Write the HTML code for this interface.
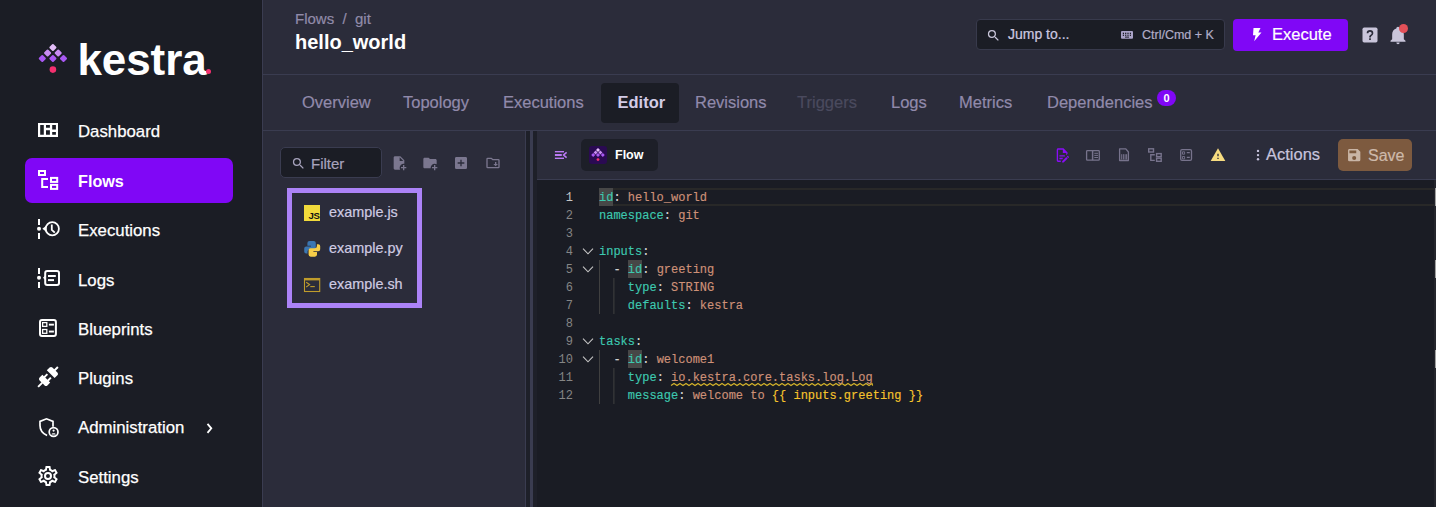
<!DOCTYPE html>
<html><head><meta charset="utf-8">
<style>
*{box-sizing:border-box;margin:0;padding:0}
html,body{width:1436px;height:507px;overflow:hidden;background:#2b2c3a;font-family:"Liberation Sans",sans-serif}
.abs{position:absolute}
svg{position:absolute;overflow:visible}
#side{position:absolute;left:0;top:0;width:262px;height:507px;background:#1b1d25}
#sideb{position:absolute;left:261px;top:0;width:1px;height:507px;background:#1a1b22}
#vline{position:absolute;left:262px;top:0;width:1px;height:507px;background:#3a3c50}
.mt{position:absolute;left:78px;font-size:16.8px;color:#fff;-webkit-text-stroke:0.25px currentColor;white-space:nowrap;line-height:20px}
.hl{position:absolute;height:1px;background:#3a3c50}
.tab{-webkit-text-stroke:0.2px currentColor;position:absolute;top:83px;height:39px;line-height:39px;font-size:16.5px;color:#918aab;white-space:nowrap}
.code{-webkit-text-stroke:0.15px currentColor;position:absolute;left:599px;font-family:"Liberation Mono",monospace;font-size:12px;line-height:18px;white-space:pre;color:#d4d4d4}
.k{color:#3dc9b0}.v{color:#ce9178}.y{color:#f5c32c}.p{color:#d4d4d4}
.ln{position:absolute;left:530px;width:43px;top:0;font-family:"Liberation Mono",monospace;font-size:12px;line-height:18px;color:#858585;text-align:right}
.fi{-webkit-text-stroke:0.2px currentColor;position:absolute;left:329px;font-size:14.4px;color:#cfcbe2;line-height:20px;white-space:nowrap}
.tic{fill:none;stroke:#6f6d84;stroke-width:1.5}
</style></head><body>
<div id="side"></div>
<div id="sideb"></div>
<div id="vline"></div>

<!-- logo -->
<svg style="left:0;top:0" width="80" height="80" viewBox="0 0 80 80">
    <g transform="rotate(45 52.9 47.5)"><rect x="50.1" y="44.7" width="5.6" height="5.6" rx="1" fill="#e3bdf8"/></g>
    <g transform="rotate(45 47.6 53)"><rect x="44.8" y="50.2" width="5.6" height="5.6" rx="1" fill="#c98cf3"/></g>
    <g transform="rotate(45 58.2 53)"><rect x="55.4" y="50.2" width="5.6" height="5.6" rx="1" fill="#c98cf3"/></g>
    <g transform="rotate(45 42.3 58.5)"><rect x="39.5" y="55.7" width="5.6" height="5.6" rx="1" fill="#a958f3"/></g>
    <g transform="rotate(45 52.9 58.5)"><rect x="50.1" y="55.7" width="5.6" height="5.6" rx="1" fill="#a958f3"/></g>
    <g transform="rotate(45 63.5 58.5)"><rect x="60.7" y="55.7" width="5.6" height="5.6" rx="1" fill="#a958f3"/></g>
    <circle cx="52.9" cy="69.6" r="3.3" fill="#f4306f"/>
</svg>
<div class="abs" style="left:77.5px;top:35px;font-size:44px;font-weight:bold;color:#fff;letter-spacing:-0.1px">kestra</div>
<div class="abs" style="left:205.6px;top:68.8px;width:5.4px;height:5.4px;border-radius:50%;background:#f4306f"></div>

<!-- menu -->
<div class="abs" style="left:25px;top:158px;width:208px;height:45px;border-radius:7px;background:#8007f6"></div>
<!-- dashboard icon -->
<svg style="left:0;top:0" width="70" height="500" viewBox="0 0 70 500">
  <path fill="#fff" fill-rule="evenodd" d="M38 123H58V137H38Z M40.2 125.1H43.8V134.8H40.2Z M46 125.1H49.9V127.7H46Z M46 130.2H49.9V134.8H46Z M52.2 125.1H55.9V129.6H52.2Z M52.2 132.1H55.9V134.8H52.2Z"/>
  <!-- flows -->
  <g fill="none" stroke="#fff" stroke-width="2">
    <rect x="39" y="171" width="6" height="4"/>
    <path d="M48 179H42.2V187H48"/>
    <rect x="51" y="177.9" width="6.2" height="4"/>
    <rect x="51" y="184.9" width="6.2" height="4"/>
  </g>
  <!-- executions -->
  <g fill="#fff">
    <rect x="38" y="219" width="2" height="6"/>
    <circle cx="39" cy="228.8" r="2"/>
    <rect x="38" y="233" width="2" height="6"/>
  </g>
  <g fill="none" stroke="#fff" stroke-width="1.8">
    <circle cx="52.3" cy="228.8" r="6.6"/>
    <path d="M51.8 224.6V229.8L54.8 232.6"/>
  </g>
  <g fill="#fff"><path d="M42.4 228.8L46.4 225.6V232Z"/>
  </g>
  <!-- logs -->
  <g fill="#fff">
    <rect x="38" y="268" width="2" height="6"/>
    <circle cx="39" cy="277.8" r="2"/>
    <rect x="38" y="282" width="2" height="6"/>
    <path d="M43 277.8 L45 275.8 V279.8Z"/>
    <rect x="48" y="275" width="7.8" height="2"/>
    <rect x="48" y="279.1" width="6" height="2"/>
  </g>
  <rect x="45.2" y="271" width="13.8" height="14" rx="2" fill="none" stroke="#fff" stroke-width="2"/>
  <!-- blueprints -->
  <g fill="none" stroke="#fff">
    <rect x="40" y="320" width="15.9" height="15.9" rx="2" stroke-width="2"/>
    <rect x="42.6" y="322.6" width="4.2" height="3.8" stroke-width="1.3"/>
    <rect x="42.6" y="329.5" width="4.2" height="3.8" stroke-width="1.3"/>
  </g>
  <g fill="#fff">
    <rect x="48.9" y="323.7" width="5" height="1.9"/>
    <rect x="48.9" y="330.6" width="5" height="1.9"/>
  </g>
  <!-- plugins -->
  <path transform="translate(36 365)" fill="#fff" d="M21.4 7.5C22.2 8.3 22.2 9.6 21.4 10.3L18.6 13.1L10.8 5.3L13.6 2.5C14.4 1.7 15.7 1.7 16.4 2.5L18.2 4.3L21.2 1.3L22.6 2.7L19.6 5.7L21.4 7.5M15.6 13.3L14.2 11.9L11.4 14.7L9.3 12.6L12.1 9.8L10.7 8.4L7.9 11.2L6.4 9.8L3.6 12.6C2.8 13.4 2.8 14.7 3.6 15.4L5.4 17.2L1.4 21.2L2.8 22.6L6.8 18.6L8.6 20.4C9.4 21.2 10.7 21.2 11.4 20.4L14.2 17.6L12.8 16.2L15.6 13.3Z"/>
  <!-- administration -->
  <g fill="none" stroke="#fff" stroke-width="1.7">
    <path d="M47.1 435.6 C42.5 433.5 40 429.5 40 425.5 V421.4 L46.5 418.8 L53 421.4 V426.8"/>
    <circle cx="53.6" cy="432" r="4.4"/>
  </g>
  <g fill="#fff">
    <circle cx="53.6" cy="430.6" r="1.1"/>
    <path d="M51.4 434.4 C51.6 432.9 55.6 432.9 55.8 434.4 Z"/>
  </g>
  <!-- settings -->
  <path transform="translate(36 464)" fill="#fff" d="M12,8A4,4 0 0,1 16,12A4,4 0 0,1 12,16A4,4 0 0,1 8,12A4,4 0 0,1 12,8M12,10A2,2 0 0,0 10,12A2,2 0 0,0 12,14A2,2 0 0,0 14,12A2,2 0 0,0 12,10M10,22C9.75,22 9.54,21.82 9.5,21.58L9.13,18.93C8.5,18.68 7.96,18.34 7.440,17.94L4.95,18.95C4.73,19.03 4.46,18.95 4.34,18.73L2.34,15.27C2.21,15.05 2.27,14.78 2.46,14.63L4.57,12.97L4.5,12L4.57,11L2.46,9.37C2.27,9.22 2.21,8.95 2.34,8.73L4.34,5.27C4.46,5.05 4.73,4.96 4.95,5.05L7.44,6.05C7.96,5.66 8.5,5.32 9.13,5.07L9.5,2.42C9.54,2.18 9.75,2 10,2H14C14.25,2 14.46,2.18 14.5,2.42L14.87,5.07C15.5,5.32 16.04,5.66 16.56,6.05L19.05,5.05C19.27,4.96 19.54,5.05 19.66,5.27L21.66,8.73C21.79,8.95 21.73,9.22 21.54,9.37L19.43,11L19.5,12L19.43,13L21.54,14.63C21.73,14.78 21.79,15.05 21.66,15.27L19.66,18.73C19.54,18.950 19.27,19.04 19.05,18.95L16.56,17.95C16.04,18.34 15.5,18.68 14.87,18.93L14.5,21.58C14.46,21.82 14.25,22 14,22H10M11.25,4L10.88,6.61C9.68,6.86 8.62,7.5 7.85,8.39L5.44,7.35L4.69,8.65L6.8,10.2C6.4,11.37 6.4,12.64 6.8,13.8L4.68,15.36L5.43,16.66L7.86,15.62C8.63,16.5 9.68,17.14 10.87,17.38L11.24,20H12.76L13.13,17.39C14.32,17.14 15.37,16.5 16.14,15.62L18.57,16.66L19.32,15.36L17.2,13.81C17.6,12.64 17.6,11.37 17.2,10.2L19.31,8.65L18.56,7.35L16.15,8.39C15.38,7.5 14.32,6.86 13.12,6.62L12.75,4H11.25Z"/>
</svg>
<div class="mt" style="top:122px">Dashboard</div>
<div class="mt" style="top:171px;font-weight:bold;font-size:16.2px;-webkit-text-stroke:0">Flows</div>
<div class="mt" style="top:220.5px">Executions</div>
<div class="mt" style="top:270.5px">Logs</div>
<div class="mt" style="top:319.5px">Blueprints</div>
<div class="mt" style="top:369px">Plugins</div>
<div class="mt" style="top:418px">Administration</div>
<svg style="left:200px;top:418px" width="20" height="20" viewBox="0 0 20 20"><path d="M7.5 5.8L11.3 10.3L7.5 14.8" fill="none" stroke="#fff" stroke-width="1.8"/></svg>
<div class="mt" style="top:467.5px">Settings</div>

<!-- header -->
<div class="abs" style="left:295px;top:10px;-webkit-text-stroke:0.2px currentColor;font-size:15px;color:#918ba9;white-space:pre">Flows  /  git</div>
<div class="abs" style="left:295px;top:31px;font-size:20px;font-weight:bold;color:#fff">hello_world</div>
<div class="hl" style="left:263px;top:74px;width:1173px"></div>

<!-- jump to -->
<div class="abs" style="left:976px;top:19px;width:249px;height:31px;background:#1b1d25;border:1px solid #383a4c;border-radius:4px"></div>
<svg style="left:986px;top:28px" width="15" height="15" viewBox="0 0 24 24"><path fill="#c9c6da" d="M9.5,3A6.5,6.5 0 0,1 16,9.5C16,11.11 15.41,12.59 14.44,13.730L14.71,14H15.5L20.5,19L19,20.5L14,15.5V14.71L13.73,14.44C12.59,15.41 11.11,16 9.5,16A6.5,6.5 0 0,1 3,9.5A6.5,6.5 0 0,1 9.5,3M9.5,5C7,5 5,7 5,9.5C5,12 7,14 9.5,14C12,14 14,12 14,9.5C14,7 12,5 9.5,5Z"/></svg>
<div class="abs" style="left:1008px;top:26.4px;-webkit-text-stroke:0.2px currentColor;font-size:14px;color:#cdc8e0;white-space:nowrap">Jump to...</div>
<svg style="left:0;top:0" width="1436" height="60" viewBox="0 0 1436 60"><rect x="1121" y="31" width="12" height="7.8" rx="1" fill="#aaa3c8"/><g fill="#1c1d26"><rect x="1122.8" y="32.7" width="1.2" height="1.3"/><rect x="1122.8" y="34.6" width="1.2" height="1.3"/><rect x="1125.1" y="32.7" width="1.2" height="1.3"/><rect x="1125.1" y="34.6" width="1.2" height="1.3"/><rect x="1127.4" y="32.7" width="1.2" height="1.3"/><rect x="1127.4" y="34.6" width="1.2" height="1.3"/><rect x="1129.8" y="32.7" width="1.2" height="1.3"/><rect x="1129.8" y="34.6" width="1.2" height="1.3"/><rect x="1125" y="36.6" width="4" height="1"/></g></svg>
<div class="abs" style="left:1142px;top:28px;-webkit-text-stroke:0.2px currentColor;font-size:12.5px;color:#b1adc8;white-space:nowrap">Ctrl/Cmd + K</div>

<!-- execute -->
<div class="abs" style="left:1233px;top:19px;width:115px;height:32px;background:#8007f6;border-radius:4px"></div>
<svg style="left:1250px;top:27px" width="14" height="15" viewBox="0 0 14 15"><path fill="#fff" d="M3.5 1H10.5L8.3 5.6H11.5L4.2 14.2L5.6 8.2H3Z"/></svg>
<div class="abs" style="left:1272px;top:25px;-webkit-text-stroke:0.2px currentColor;font-size:16.5px;color:#fff;white-space:nowrap">Execute</div>
<!-- help -->
<svg style="left:1360px;top:25px" width="20" height="20" viewBox="0 0 24 24"><path fill="#c9c5da" d="M5,3H19A2,2 0 0,1 21,5V19A2,2 0 0,1 19,21H5A2,2 0 0,1 3,19V5A2,2 0 0,1 5,3Z"/><path fill="#2b2c3a" d="M11,18H13V16H11V18M12,6A4,4 0 0,0 8,10H10A2,2 0 0,1 12,8A2,2 0 0,1 14,10C14,12 11,11.75 11,15H13C13,12.75 16,12.5 16,10A4,4 0 0,0 12,6Z"/></svg>
<!-- bell -->
<svg style="left:1388px;top:25px" width="20" height="20" viewBox="0 0 24 24"><path fill="#c9c5da" d="M21,19V20H3V19L5,17V11C5,7.9 7.03,5.17 10,4.29C10,4.19 10,4.1 10,4A2,2 0 0,1 12,2A2,2 0 0,1 14,4C14,4.1 14,4.19 14,4.29C16.97,5.17 19,7.9 19,11V17L21,19M14,21A2,2 0 0,1 12,23A2,2 0 0,1 10,21"/></svg>
<div class="abs" style="left:1398.5px;top:24.3px;width:9px;height:9px;border-radius:50%;background:#e35058"></div>

<!-- tabs -->
<div class="tab" style="left:302px">Overview</div>
<div class="tab" style="left:403px">Topology</div>
<div class="tab" style="left:503px">Executions</div>
<div class="abs" style="left:601px;top:83px;width:78px;height:40px;background:#1b1d25;border-radius:4px"></div>
<div class="tab" style="left:617.5px;color:#d2cbe6;font-weight:bold;-webkit-text-stroke:0">Editor</div>
<div class="tab" style="left:695px">Revisions</div>
<div class="tab" style="left:797px;color:#4a4a5e">Triggers</div>
<div class="tab" style="left:891px">Logs</div>
<div class="tab" style="left:959px">Metrics</div>
<div class="tab" style="left:1047px">Dependencies</div>
<div class="abs" style="left:1157px;top:90px;width:19px;height:16px;border-radius:8px;background:#8007f6;color:#fff;font-size:11px;font-weight:bold;text-align:center;line-height:16px">0</div>
<div class="hl" style="left:263px;top:130px;width:1173px"></div>

<!-- file panel -->
<div class="abs" style="left:280px;top:147px;width:102px;height:31px;background:#1b1d25;border:1px solid #3a3c50;border-radius:5px"></div>
<svg style="left:290.5px;top:156px" width="15" height="15" viewBox="0 0 24 24"><path fill="#a7a3bd" d="M9.5,3A6.5,6.5 0 0,1 16,9.5C16,11.11 15.41,12.59 14.44,13.73L14.71,14H15.5L20.5,19L19,20.5L14,15.5V14.71L13.73,14.44C12.59,15.41 11.11,16 9.5,16A6.5,6.5 0 0,1 3,9.5A6.5,6.5 0 0,1 9.5,3M9.5,5C7,5 5,7 5,9.5C5,12 7,14 9.5,14C12,14 14,12 14,9.5C14,7 12,5 9.5,5Z"/></svg>
<div class="abs" style="left:311px;top:155px;-webkit-text-stroke:0.2px currentColor;font-size:15px;color:#a7a3bd">Filter</div>
<svg style="left:391px;top:154.7px" width="16" height="16" viewBox="0 0 24 24"><path fill="#7b778f" d="M14 2H6C4.89 2 4 2.9 4 4V20C4 21.11 4.89 22 6 22H13.81C13.28 21.09 13 20.05 13 19C13 15.69 15.69 13 19 13C19.34 13 19.67 13.03 20 13.08V8L14 2M13 9V3.5L18.5 9H13M18 15V18H15V20H18V23H20V20H23V18H20V15H18Z"/></svg>
<svg style="left:421.8px;top:155px" width="16" height="16" viewBox="0 0 24 24"><path fill="#7b778f" d="M13 19C13 19.34 13.04 19.67 13.09 20H4C2.9 20 2 19.11 2 18V6C2 4.89 2.89 4 4 4H10L12 6H20C21.1 6 22 6.89 22 8V13.81C21.12 13.3 20.1 13 19 13C15.69 13 13 15.69 13 19M20 18V15H18V18H15V20H18V23H20V20H23V18H20Z"/></svg>
<svg style="left:452.8px;top:154.9px" width="16" height="16" viewBox="0 0 24 24"><path fill="#7b778f" d="M17,13H13V17H11V13H7V11H11V7H13V11H17M19,3H5C3.89,3 3,3.89 3,5V19A2,2 0 0,0 5,21H19A2,2 0 0,0 21,19V5C21,3.89 20.1,3 19,3Z"/></svg>
<svg style="left:484.6px;top:155px" width="16" height="16" viewBox="0 0 24 24"><path fill="#7b778f" d="M20 6H12L10 4H4A2 2 0 0 0 2 6V18A2 2 0 0 0 4 20H20A2 2 0 0 0 22 18V8A2 2 0 0 0 20 6M20 18H4V6H9.17L11.17 8H20V18M16 17L12.5 13.5H15V10.5H17V13.5H19.5Z"/></svg>

<div class="abs" style="left:287px;top:188px;width:135px;height:120px;border:5px solid #ac83f7"></div>
<div class="abs" style="left:304px;top:205px;width:16px;height:16px;background:#f1da3b"></div>
<div class="abs" style="left:308.6px;top:211px;font-size:9.6px;font-weight:bold;color:#111;letter-spacing:-0.4px;line-height:10px">JS</div>
<svg style="left:0;top:0" width="330" height="300" viewBox="0 0 330 300">
  <path fill="#3b76b1" d="M310.5 241h3.2a2.1 2.1 0 0 1 2.1 2.1v4.4a1.9 1.9 0 0 1 -1.9 1.9h-4.2a2.2 2.2 0 0 0 -2.2 2.2v1.9h-1.3a2 2 0 0 1 -2 -2v-3.1a2 2 0 0 1 2 -2h4.8v-0.7h-3.6v-2.6a2.1 2.1 0 0 1 2.1 -2.1z"/>
  <path fill="#f6cd48" d="M313.9 256.7h-3.2a2.1 2.1 0 0 1 -2.1 -2.1v-4.4a1.9 1.9 0 0 1 1.9 -1.9h4.2a2.2 2.2 0 0 0 2.2 -2.2v-1.9h1.3a2 2 0 0 1 2 2v3.1a2 2 0 0 1 -2 2h-4.8v0.7h3.6v2.6a2.1 2.1 0 0 1 -2.1 2.1z"/>
  <g fill="none" stroke="#bf9c2c">
    <rect x="304.5" y="278.5" width="15.2" height="13" stroke-width="1.1"/>
    <path d="M304.5 279.6H319.7" stroke-width="1.6"/>
    <path d="M306.2 282.2L309.6 284.6L306.2 287" stroke-width="1.1"/>
    <path d="M310.3 286.6H314.8" stroke-width="1.1"/>
  </g>
</svg>
<div class="fi" style="top:202px">example.js</div>
<div class="fi" style="top:238px">example.py</div>
<div class="fi" style="top:274px">example.sh</div>

<!-- splitter -->
<div class="abs" style="left:525px;top:131px;width:1px;height:376px;background:#3a3c50"></div>
<div class="abs" style="left:526px;top:131px;width:4px;height:376px;background:#1e2029"></div>
<div class="abs" style="left:530px;top:131px;width:3px;height:376px;background:#3a3c50"></div>
<div class="abs" style="left:533px;top:131px;width:4px;height:376px;background:#1e2029"></div>

<!-- editor toolbar -->
<div class="hl" style="left:537px;top:179px;width:899px"></div>
<svg style="left:0;top:0" width="1436" height="180" viewBox="0 0 1436 180">
  <g stroke="#bb7af5" fill="none">
    <path d="M554.9 151.7H564" stroke-width="1.4"/>
    <path d="M554.9 155H561.8" stroke-width="2"/>
    <path d="M554.9 158.3H564" stroke-width="1.4"/>
    <path d="M566.6 152.4L563.6 155L566.6 157.6" stroke-width="1.6"/>
  </g>
</svg>
<div class="abs" style="left:581px;top:139px;width:77px;height:32px;background:#1d1f28;border-radius:5px"></div>
<div class="abs" style="left:589px;top:146px;width:18px;height:18px;background:#2a0a52;border-radius:3px"></div>
<svg style="left:0;top:0" width="1436" height="180" viewBox="0 0 1436 180">
  <g transform="rotate(45 598 150.1)"><rect x="596.6" y="148.7" width="2.8" height="2.8" fill="#e3bdf8"/></g>
  <g transform="rotate(45 595.6 152.6)"><rect x="594.2" y="151.2" width="2.8" height="2.8" fill="#c98cf3"/></g>
  <g transform="rotate(45 600.4 152.6)"><rect x="599" y="151.2" width="2.8" height="2.8" fill="#c98cf3"/></g>
  <g transform="rotate(45 593.2 155.1)"><rect x="591.8" y="153.7" width="2.8" height="2.8" fill="#a958f3"/></g>
  <g transform="rotate(45 598 155.1)"><rect x="596.6" y="153.7" width="2.8" height="2.8" fill="#a958f3"/></g>
  <g transform="rotate(45 602.8 155.1)"><rect x="601.4" y="153.7" width="2.8" height="2.8" fill="#a958f3"/></g>
  <circle cx="598" cy="159.6" r="1.4" fill="#f4306f"/>
</svg>
<div class="abs" style="left:615px;top:148px;font-size:12.5px;font-weight:bold;color:#fff">Flow</div>

<svg style="left:1054.1px;top:146.5px" width="16.3" height="16.3" viewBox="0 0 24 24"><path fill="#8a0cf7" d="M8,12H16V14H8V12M10,20H6V4H13V9H18V12.1L20,10.1V8L14,2H6A2,2 0 0,0 4,4V20A2,2 0 0,0 6,22H10V20M8,18H12.1L13,17.1V16H8V18M20.2,13C20.3,13 20.5,13.1 20.6,13.2L21.9,14.5C22.1,14.7 22.1,15.1 21.9,15.3L20.9,16.3L18.8,14.2L19.8,13.2C19.9,13.1 20,13 20.2,13M20.2,16.9L14.1,23H12V20.9L18.1,14.8L20.2,16.9Z"/></svg>
<svg style="left:0;top:0" width="1436" height="180" viewBox="0 0 1436 180">
  <g fill="none" stroke="#77738c">
    <rect x="1086.6" y="150.6" width="12.7" height="9.6" rx="0.8" stroke-width="1.3"/>
    <path d="M1092.6 150.6V160.2" stroke-width="1.5"/>
    <path d="M1094.3 153.3H1098M1094.3 155.4H1098M1094.3 157.5H1098" stroke-width="1"/>
    <path d="M1119.6 149.5V160.5H1128.4V152L1125.8 148.8H1119.6Z" stroke-width="1.3" stroke-linejoin="round"/>
    <path d="M1121.7 154.2V159.5M1123.4 154.2V159.5M1125.1 154.2V159.5M1126.6 154.2V159.5" stroke-width="1"/>
    <rect x="1148.7" y="148.8" width="4.8" height="3.2" stroke-width="1.4"/>
    <path d="M1154.8 154.8H1150.8V160.4H1154.8" stroke-width="1.4"/>
    <rect x="1156.6" y="153.6" width="4.6" height="3.1" stroke-width="1.4"/>
    <rect x="1156.6" y="158.2" width="4.6" height="3.1" stroke-width="1.4"/>
    <rect x="1180.7" y="149.6" width="10.8" height="10.8" rx="1.3" stroke-width="1.3"/>
    <path d="M1182.5 151.8H1184.6V154.2H1182.5ZM1182.5 156.5H1184.6V158.9H1182.5Z" stroke-width="0.9"/>
    <path d="M1186.8 152.6H1189.8M1186.8 157.4H1189.8" stroke-width="1.2"/>
  </g>
</svg>
<svg style="left:1210px;top:146.8px" width="16" height="16" viewBox="0 0 24 24"><path fill="#f7dc80" d="M1,21H23L12,2L1,21Z"/><path fill="#2b2c3a" d="M13,14H11V10H13M13,18H11V16H13Z"/></svg>

<svg style="left:0;top:0" width="1436" height="180" viewBox="0 0 1436 180">
  <g fill="#c7c3dd"><circle cx="1258" cy="150.9" r="1.2"/><circle cx="1258" cy="155.1" r="1.2"/><circle cx="1258" cy="159.3" r="1.2"/></g>
</svg>
<div class="abs" style="left:1266px;top:145px;-webkit-text-stroke:0.2px currentColor;font-size:16.5px;color:#c7c3dd">Actions</div>
<div class="abs" style="left:1338px;top:139px;width:74px;height:32px;background:#7d5a3f;border-radius:5px"></div>
<svg style="left:1345.6px;top:147px" width="16.4" height="16.4" viewBox="0 0 24 24"><path fill="#c9b5a6" d="M15,9H5V5H15M12,19A3,3 0 0,1 9,16A3,3 0 0,1 12,13A3,3 0 0,1 15,16A3,3 0 0,1 12,19M17,3H5C3.89,3 3,3.9 3,5V19A2,2 0 0,0 5,21H19A2,2 0 0,0 21,19V7L17,3Z"/></svg>
<div class="abs" style="left:1368px;top:146.5px;-webkit-text-stroke:0.2px currentColor;font-size:16px;color:#cdb9aa">Save</div>

<!-- editor code area -->
<div class="abs" style="left:537px;top:180px;width:899px;height:327px;background:#1a1c24"></div>
<div class="abs" style="left:599px;top:188px;width:835px;height:18px;border-top:2px solid #282828;border-bottom:2px solid #282828"></div>
<div class="abs" style="left:599px;top:188px;width:14.4px;height:18px;background:#474747"></div>
<div class="abs" style="left:627.8px;top:260px;width:14.4px;height:18px;background:#474747"></div>
<div class="abs" style="left:627.8px;top:350px;width:14.4px;height:18px;background:#474747"></div>
<div class="abs" style="left:1434px;top:180px;width:2px;height:327px;background:#25262d"></div>
<div class="abs" style="left:1434.5px;top:188px;width:1.5px;height:18px;background:#a0a0a0"></div>
<div class="abs" style="left:1434.5px;top:260px;width:1.5px;height:18px;background:#a0a0a0"></div>
<div class="abs" style="left:1434.5px;top:350px;width:1.5px;height:18px;background:#a0a0a0"></div>
<svg style="left:0;top:0" width="1436" height="507" viewBox="0 0 1436 507">
  <g fill="none" stroke="#404040" stroke-width="1">
    <path d="M599.5 260V314M613.9 278V314M599.5 350V404M613.9 368V404"/>
  </g>
  <g fill="none" stroke="#c5c5c5" stroke-width="1.1">
    <path d="M583 248.6L588 253.8L593 248.6M583 266.6L588 271.8L593 266.6M583 338.6L588 343.8L593 338.6M583 356.6L588 361.8L593 356.6"/>
  </g>
  <path fill="none" stroke="#d4b22a" stroke-width="1.2" stroke-linejoin="round" d="M671.0 385.6 L674.0 383.4 L677.0 385.6 L680.0 383.4 L683.0 385.6 L686.0 383.4 L689.0 385.6 L692.0 383.4 L695.0 385.6 L698.0 383.4 L701.0 385.6 L704.0 383.4 L707.0 385.6 L710.0 383.4 L713.0 385.6 L716.0 383.4 L719.0 385.6 L722.0 383.4 L725.0 385.6 L728.0 383.4 L731.0 385.6 L734.0 383.4 L737.0 385.6 L740.0 383.4 L743.0 385.6 L746.0 383.4 L749.0 385.6 L752.0 383.4 L755.0 385.6 L758.0 383.4 L761.0 385.6 L764.0 383.4 L767.0 385.6 L770.0 383.4 L773.0 385.6 L776.0 383.4 L779.0 385.6 L782.0 383.4 L785.0 385.6 L788.0 383.4 L791.0 385.6 L794.0 383.4 L797.0 385.6 L800.0 383.4 L803.0 385.6 L806.0 383.4 L809.0 385.6 L812.0 383.4 L815.0 385.6 L818.0 383.4 L821.0 385.6 L824.0 383.4 L827.0 385.6 L830.0 383.4 L833.0 385.6 L836.0 383.4 L839.0 385.6 L842.0 383.4 L845.0 385.6 L848.0 383.4 L851.0 385.6 L854.0 383.4 L857.0 385.6 L860.0 383.4 L863.0 385.6 L866.0 383.4 L869.0 385.6 L872.0 383.4 L872.6 385.6"/>
</svg>
<div class="ln" style="top:189px;color:#c6c6c6">1</div>
<div class="ln" style="top:207px">2</div>
<div class="ln" style="top:225px">3</div>
<div class="ln" style="top:243px">4</div>
<div class="ln" style="top:261px">5</div>
<div class="ln" style="top:279px">6</div>
<div class="ln" style="top:297px">7</div>
<div class="ln" style="top:315px">8</div>
<div class="ln" style="top:333px">9</div>
<div class="ln" style="top:351px">10</div>
<div class="ln" style="top:369px">11</div>
<div class="ln" style="top:387px">12</div>
<div class="code" style="top:189px"><span class="k">id</span>: <span class="v">hello_world</span>
<span class="k">namespace</span>: <span class="v">git</span>

<span class="k">inputs</span>:
  - <span class="k">id</span>: <span class="v">greeting</span>
    <span class="k">type</span>: <span class="v">STRING</span>
    <span class="k">defaults</span>: <span class="v">kestra</span>

<span class="k">tasks</span>:
  - <span class="k">id</span>: <span class="v">welcome1</span>
    <span class="k">type</span>: <span class="v">io.kestra.core.tasks.log.Log</span>
    <span class="k">message</span>: <span class="v">welcome to </span><span class="y">{{ inputs.greeting }}</span></div>
</body></html>
